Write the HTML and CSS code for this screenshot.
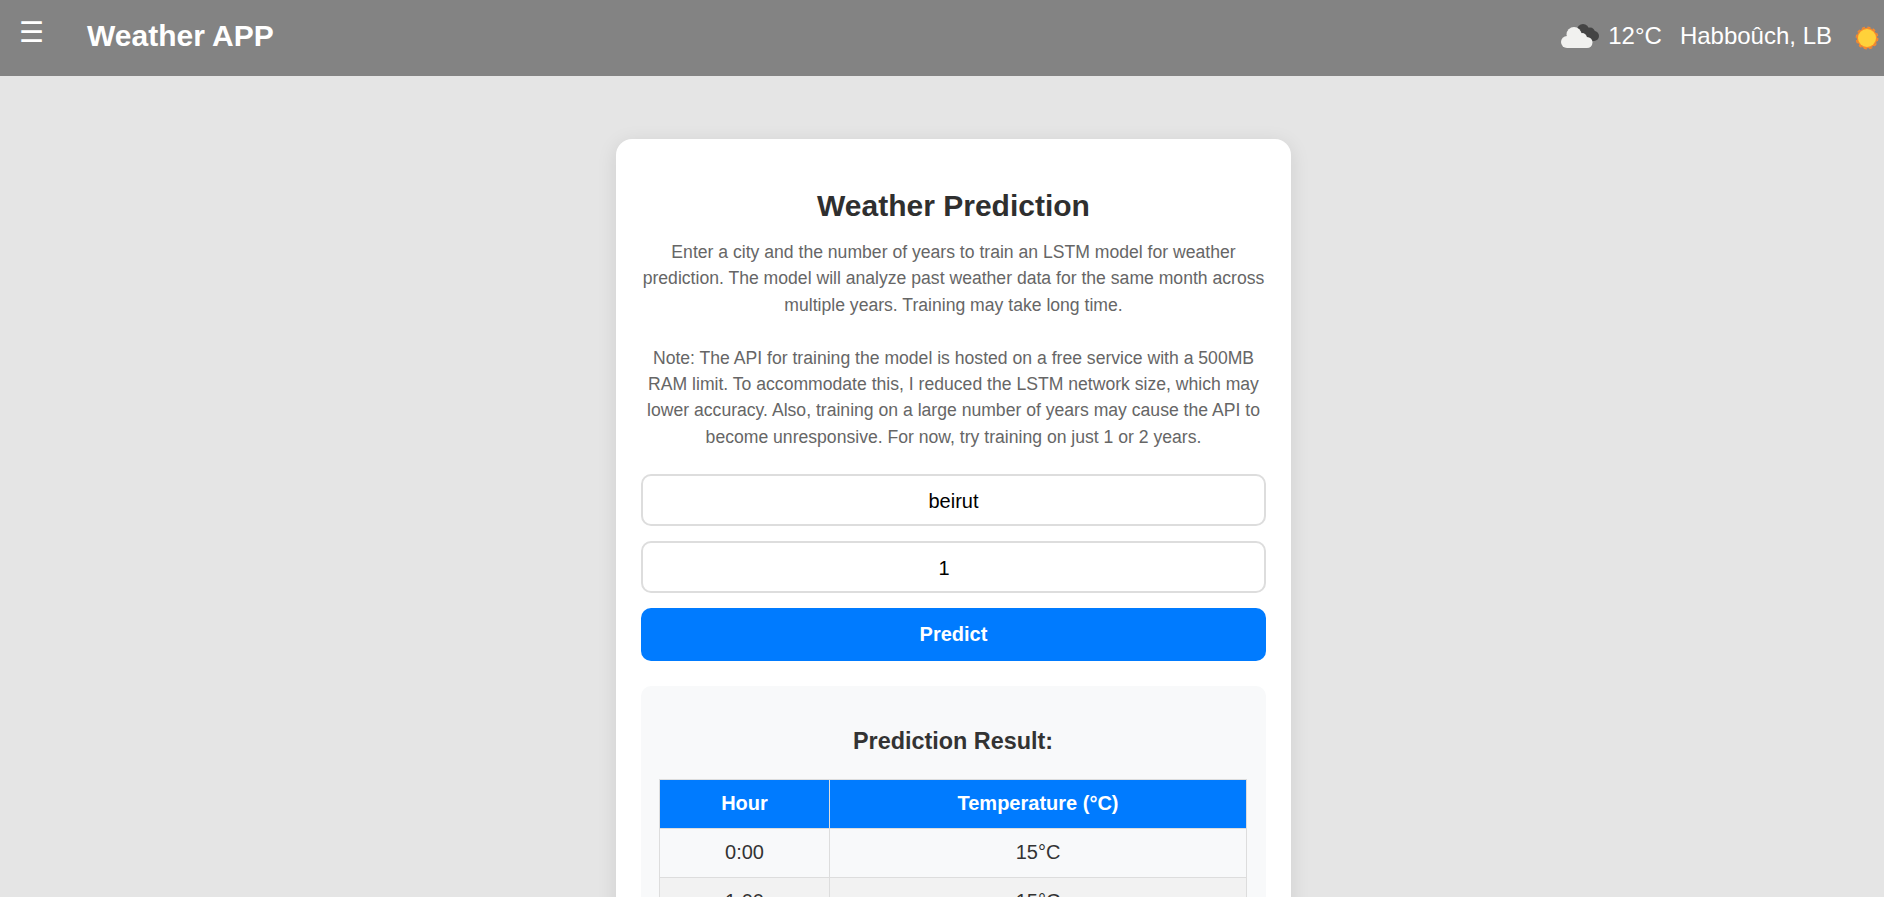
FILE: index.html
```html
<!DOCTYPE html>
<html lang="en">
<head>
<meta charset="utf-8">
<title>Weather APP</title>
<link rel="stylesheet" href="styles.css">
</head>
<body>
<header class="topbar">
  <div class="topbar-left">
    <span class="menu-btn">☰</span>
    <span class="brand">Weather APP</span>
  </div>
  <div class="topbar-right">
    <svg class="cloud" width="40" height="26" viewBox="0 0 40 26">
      <g fill="#444">
        <circle cx="23" cy="7" r="6"/>
        <circle cx="30" cy="9.500" r="5"/>
        <circle cx="34" cy="13" r="5"/>
        <rect x="20" y="8" width="14" height="10"/>
      </g>
      <g fill="#f1f1ef">
        <circle cx="14" cy="11.500" r="7.500"/>
        <circle cx="7" cy="19" r="6"/>
        <circle cx="22" cy="15" r="5"/>
        <circle cx="27" cy="19.500" r="5.500"/>
        <rect x="7" y="15" width="20" height="10"/>
      </g>
    </svg>
    <span class="temp">12°C</span>
    <span class="place">Habboûch, LB</span>
    <svg class="sun" width="24" height="24" viewBox="0 0 24 24">
      <circle cx="12" cy="12" r="10.300" fill="#f98a2b"/>
      <circle cx="12" cy="12" r="10.800" fill="none" stroke="#f98a2b" stroke-width="1.200" stroke-dasharray="3.200 2.455"/>
      <circle cx="12" cy="12" r="9" fill="#ffd23a"/>
    </svg>
  </div>
</header>
<main class="page">
  <section class="card">
    <h1 class="title">Weather Prediction</h1>
    <p class="intro">Enter a city and the number of years to train an LSTM model for weather prediction. The model will analyze past weather data for the same month across multiple years. Training may take long time.<br><br>Note: The API for training the model is hosted on a free service with a 500MB RAM limit. To accommodate this, I reduced the LSTM network size, which may lower accuracy. Also, training on a large number of years may cause the API to become unresponsive. For now, try training on just 1 or 2 years.</p>
    <input class="field" type="text" value="beirut">
    <input class="field field-number" type="number" value="1">
    <button class="predict">Predict</button>
    <div class="result">
      <h3 class="result-title">Prediction Result:</h3>
      <table class="grid">
        <thead><tr><th class="col-hour">Hour</th><th>Temperature (°C)</th></tr></thead>
        <tbody>
          <tr><td>0:00</td><td>15°C</td></tr>
          <tr><td>1:00</td><td>15°C</td></tr>
          <tr><td>2:00</td><td>15°C</td></tr>
        </tbody>
      </table>
    </div>
  </section>
</main>
</body>
</html>
```
FILE: styles.css
```css
* { box-sizing: border-box; }
html, body { margin: 0; padding: 0; }
body {
  height: 897px;
  overflow: hidden;
  background: #e5e5e5;
  font-family: "Liberation Sans", Arial, sans-serif;
}
.topbar {
  height: 76px;
  background: #838383;
  display: flex;
  align-items: center;
  justify-content: space-between;
  color: #fff;
  padding: 0 5px 4px 19px;
}
.topbar-left { display: flex; align-items: center; }
.menu-btn { font-size: 28px; line-height: 1; width: 68px; position: relative; top: -3px; }
.brand { font-size: 30px; font-weight: 700; }
.topbar-right { display: flex; align-items: center; font-size: 24px; }
.cloud { margin-right: 8px; }
.temp { margin-right: 18px; }
.place { margin-right: 23px; }
.sun { display: block; position: relative; top: 2px; }
.page { display: flex; justify-content: center; padding: 63px 0 0 23px; }
.card {
  width: 675px;
  background: #fff;
  border-radius: 16px;
  padding: 25px;
  box-shadow: 0 4px 20px rgba(0,0,0,.1);
  text-align: center;
}
.title { margin: 24px 0 15px; font-size: 30px; line-height: 36px; color: #2f2f2f; font-weight: 700; }
.intro { margin: 0 0 24px; font-size: 17.600px; line-height: 26.400px; color: #666; }
.field {
  display: block;
  width: 100%;
  height: 52px;
  margin-bottom: 15px;
  border: 2px solid #ddd;
  border-radius: 10px;
  background: #fff;
  text-align: center;
  font: 20px "Liberation Sans", Arial, sans-serif;
  color: #000;
  padding: 13px 12px 11px;
}
.field-number { padding-right: 16px; }
.predict {
  display: block;
  width: 100%;
  height: 53px;
  border: 0;
  border-radius: 10px;
  background: #007bff;
  color: #fff;
  font: 700 20px "Liberation Sans", Arial, sans-serif;
}
.result {
  margin-top: 25px;
  background: #f8f9fa;
  border-radius: 10px;
  padding: 20px 19px 20px 18px;
}
.result-title { margin: 22px 0 25px; font-size: 23.400px; line-height: 26px; color: #333; font-weight: 700; }
.grid { width: 100%; border-collapse: collapse; font-size: 20px; color: #333; }
.grid th, .grid td { height: 49px; border: 1px solid #ddd; padding: 0 0 2px; text-align: center; }
.grid th { background: #007bff; color: #fff; font-weight: 700; }
.col-hour { width: 170px; }
.grid tbody tr:nth-child(even) td { background: #f2f2f2; }
```
